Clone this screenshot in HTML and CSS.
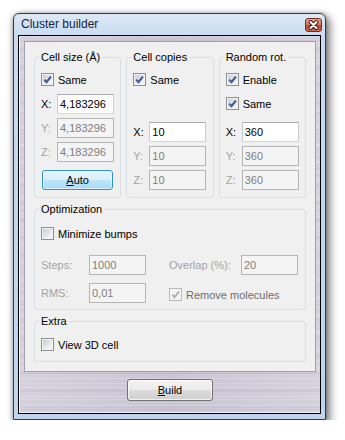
FILE: index.html
```html
<!DOCTYPE html>
<html lang="en">
<head>
    <meta charset="UTF-8">
    <title>Cluster builder</title>
    <link rel="stylesheet" href="styles.css">
</head>
<body>
    <div class="window">
        <div class="titlebar">
            <span class="title">Cluster builder</span>
            <span class="close">
                <svg width="17" height="14" viewBox="0 0 17 14">
                    <path d="M5.5 4 L11.5 10 M11.5 4 L5.5 10" stroke="#4a1c14" stroke-width="4" stroke-linecap="round"/>
                    <path d="M5.5 4 L11.5 10 M11.5 4 L5.5 10" stroke="#fff" stroke-width="2" stroke-linecap="round"/>
                </svg>
            </span>
        </div>

        <div class="frame">
            <div class="panel">
                <div class="top-groups">
                    <fieldset class="group">
                        <legend>Cell size (Å)</legend>
                        <label class="check"><span class="box"><svg viewBox="0 0 11 11"><path d="M2.3 5.6 L4.5 8.2 L8.9 2.6" /></svg></span>Same</label>
                        <div class="coords first">
                            <div class="coord"><span class="axis">X:</span><span class="field">4,183296</span></div>
                            <div class="coord off"><span class="axis">Y:</span><span class="field">4,183296</span></div>
                            <div class="coord off"><span class="axis">Z:</span><span class="field">4,183296</span></div>
                        </div>
                        <button class="btn btn-hot"><u>A</u>uto</button>
                    </fieldset>

                    <fieldset class="group">
                        <legend>Cell copies</legend>
                        <label class="check"><span class="box"><svg viewBox="0 0 11 11"><path d="M2.3 5.6 L4.5 8.2 L8.9 2.6" /></svg></span>Same</label>
                        <div class="coords">
                            <div class="coord"><span class="axis">X:</span><span class="field">10</span></div>
                            <div class="coord off"><span class="axis">Y:</span><span class="field">10</span></div>
                            <div class="coord off"><span class="axis">Z:</span><span class="field">10</span></div>
                        </div>
                    </fieldset>

                    <fieldset class="group">
                        <legend>Random rot.</legend>
                        <label class="check"><span class="box"><svg viewBox="0 0 11 11"><path d="M2.3 5.6 L4.5 8.2 L8.9 2.6" /></svg></span>Enable</label>
                        <label class="check second"><span class="box"><svg viewBox="0 0 11 11"><path d="M2.3 5.6 L4.5 8.2 L8.9 2.6" /></svg></span>Same</label>
                        <div class="coords">
                            <div class="coord"><span class="axis">X:</span><span class="field">360</span></div>
                            <div class="coord off"><span class="axis">Y:</span><span class="field">360</span></div>
                            <div class="coord off"><span class="axis">Z:</span><span class="field">360</span></div>
                        </div>
                    </fieldset>
                </div>

                <fieldset class="group opt">
                    <legend>Optimization</legend>
                    <div class="opt-grid">
                        <label class="check span-all"><span class="box"></span>Minimize bumps</label>
                        <span class="lbl">Steps:</span>
                        <span class="field off-field">1000</span>
                        <span class="lbl">Overlap (%):</span>
                        <span class="field off-field">20</span>
                        <span class="lbl">RMS:</span>
                        <span class="field off-field">0,01</span>
                        <label class="check off-check span-two"><span class="box"><svg viewBox="0 0 11 11"><path d="M2.3 5.6 L4.5 8.2 L8.9 2.6" /></svg></span>Remove molecules</label>
                    </div>
                </fieldset>

                <fieldset class="group extra">
                    <legend>Extra</legend>
                    <label class="check"><span class="box"></span>View 3D cell</label>
                </fieldset>
            </div>

            <div class="actions">
                <button class="btn btn-build"><u>B</u>uild</button>
            </div>
        </div>
    </div>
</body>
</html>
```

FILE: styles.css
```css
body {
    margin: 0;
    background-color: #fff;
    font-family: "Liberation Sans", Arial, sans-serif;
    font-size: 11px;
    color: #000;
}
.window {
    box-sizing: border-box;
    width: 313px;
    height: 407px;
    margin: 13px 0 0 13px;
    padding: 0 4px 5px;
    display: flex;
    flex-direction: column;
    border: 1px solid #3a3a3a;
    border-radius: 6px 6px 0 0;
    background: linear-gradient(#dde9f6, #c8dbf1 22px, #bed4ef);
    box-shadow: 3px 4px 9px 1px rgba(0, 0, 0, 0.5), 0 0 4px rgba(0, 0, 0, 0.25);
}
.titlebar {
    height: 21px;
    display: flex;
    justify-content: space-between;
    align-items: flex-start;
}
.title {
    padding-left: 3px;
    line-height: 21px;
    font-size: 12px;
    color: #15243c;
}
.close {
    width: 17px;
    height: 14px;
    margin: 4px -1px 0 0;
    box-sizing: border-box;
    border: 1px solid #7a2a1e;
    border-radius: 3px;
    background: linear-gradient(#e6a595, #d4705c 50%, #c0432c 51%, #cc6a4e);
    overflow: hidden;
}
.close svg {
    display: block;
    margin: -1px 0 0 -1px;
}
.frame {
    flex: 1;
    display: flex;
    flex-direction: column;
    padding: 5px 4px 0 5px;
    border: 1px solid #000;
    background-color: #d0ccd9;
    background-image:
        repeating-linear-gradient(180deg, rgba(255, 255, 255, 0.22) 0 1px, transparent 1px 4px, rgba(70, 60, 90, 0.05) 4px 5px, transparent 5px 9px),
        repeating-linear-gradient(180deg, transparent 0 6px, rgba(255, 255, 255, 0.16) 6px 8px, transparent 8px 13px, rgba(70, 60, 90, 0.04) 13px 15px, transparent 15px 17px),
        linear-gradient(90deg, rgba(255, 255, 255, 0.1), rgba(80, 70, 100, 0.05) 50%, rgba(255, 255, 255, 0.1));
    box-shadow: inset 1px 0 0 #f2f0f6, inset 0 -1px 0 #f2f0f6;
}
.panel {
    padding: 9px 9px 9px;
    border: 1px solid #a19fab;
    background-color: #f0f0f0;
}
.top-groups {
    display: flex;
    gap: 5px;
}
.top-groups .group {
    flex: 1;
}
.group {
    min-width: 0;
    margin: 0;
    padding: 10px 6px 7px;
    display: flex;
    flex-direction: column;
    border: 1px solid #d5dfe5;
    border-radius: 3px;
}
.group legend {
    margin-left: -2px;
    padding: 0 2px;
    line-height: 12px;
}
.opt {
    margin-top: 5px;
    padding: 12px 6px 6px;
}
.extra {
    margin-top: 5px;
    padding: 11px 6px 10px;
}
.check {
    height: 13px;
    display: flex;
    align-items: center;
    gap: 4px;
    white-space: nowrap;
}
.check.second {
    margin-top: 11px;
}
.box {
    box-sizing: border-box;
    width: 13px;
    height: 13px;
    flex: none;
    border: 1px solid #8e8f8f;
    background: linear-gradient(135deg, #c3c7ce, #eef0f2 70%, #f8f8f8);
    box-shadow: inset 0 0 0 1px #f4f4f4;
}
.box svg {
    display: block;
    width: 11px;
    height: 11px;
    fill: none;
    stroke: #3b5798;
    stroke-width: 2;
}
.off-check {
    color: #6d6d6d;
}
.off-check .box {
    border-color: #b9b9b9;
    background: #f4f4f4;
}
.off-check .box svg {
    stroke: #b4b4b4;
}
.coords {
    display: flex;
    flex-direction: column;
    gap: 4px;
    margin-top: auto;
}
.coords.first {
    margin-top: 8px;
}
.coord {
    display: flex;
    align-items: center;
}
.axis {
    width: 16px;
    flex: none;
}
.field {
    box-sizing: border-box;
    width: 57px;
    height: 20px;
    padding: 0 2px;
    line-height: 18px;
    border: 1px solid #abadb3;
    border-color: #abadb3 #c9cdd3 #d5d9df #c9cdd3;
    background-color: #fff;
}
.coord.off .axis,
.lbl {
    color: #a3a3a3;
}
.coord.off .field,
.off-field {
    border-color: #b5b5b5;
    background-color: #f4f4f4;
    color: #7e7e7e;
}
.btn {
    box-sizing: border-box;
    padding: 0;
    font-family: inherit;
    font-size: 11px;
    color: #000;
    border: 1px solid #707070;
    border-radius: 3px;
    background: linear-gradient(#f3f3f3, #ebebeb 50%, #dcdcdc 51%, #cfcfcf);
    box-shadow: inset 0 0 0 1px rgba(255, 255, 255, 0.7);
}
.btn-hot {
    height: 20px;
    margin: 8px 1px 0;
    border-color: #2b95d4;
    background: linear-gradient(#e8f5fd, #d8effc 50%, #bde5fb 51%, #a9dbf6);
    box-shadow: inset 0 0 0 1px rgba(255, 255, 255, 0.55);
}
.opt-grid {
    display: grid;
    grid-template-columns: 48px 80px 72px 57px;
    row-gap: 8px;
    align-items: center;
}
.span-all {
    grid-column: 1 / -1;
    margin-bottom: 7px;
}
.span-two {
    grid-column: 3 / 5;
    padding-top: 3px;
}
.actions {
    flex: 1;
    display: flex;
    justify-content: center;
    align-items: flex-start;
    padding-top: 7px;
}
.btn-build {
    width: 86px;
    height: 22px;
}
```
